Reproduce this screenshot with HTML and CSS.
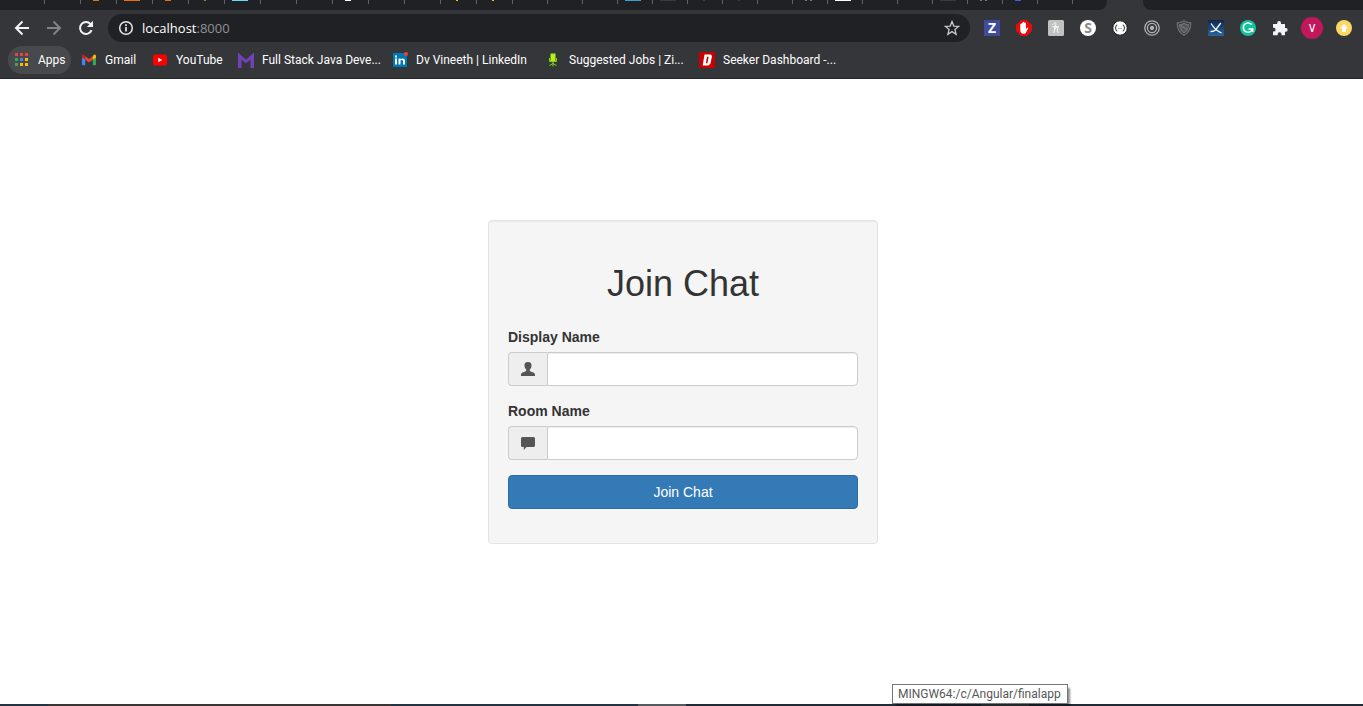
FILE: index.html
```html
<!DOCTYPE html>
<html lang="en">
<head>
<meta charset="utf-8">
<title>Join Chat</title>
<link rel="stylesheet" href="styles.css">
</head>
<body>
<header class="browser">
  <div class="tabs">
    <div class="tabs-left">
      <i class="tab"></i><i class="tab"></i>
      <i class="tab"><b class="fav dot orange"></b></i>
      <i class="tab"><b class="fav orange"></b></i>
      <i class="tab"><b class="fav dot orange"></b></i>
      <i class="tab"><b class="fav tip green"></b></i>
      <i class="tab"><b class="fav cyan"></b></i>
      <i class="tab"></i><i class="tab"></i>
      <i class="tab"><b class="fav dot white"></b></i>
      <i class="tab"></i><i class="tab"></i>
      <i class="tab"><b class="fav tip yellow"></b></i>
      <i class="tab"><b class="fav tip yellow"></b></i>
      <i class="tab narrow"></i><i class="tab narrow"></i><i class="tab narrow"></i>
      <i class="tab narrow"><b class="fav blue"></b></i>
      <i class="tab narrow"><b class="fav dim"></b></i>
      <i class="tab narrow"><b class="fav tip dim"></b></i>
      <i class="tab narrow"><b class="fav tip dim"></b></i>
      <i class="tab narrow"></i>
      <i class="tab narrow"><b class="fav pair"></b></i>
      <i class="tab narrow"><b class="fav white"></b></i>
      <i class="tab narrow"></i><i class="tab narrow"></i>
      <i class="tab narrow"><b class="fav dim"></b></i>
      <i class="tab narrow"><b class="fav pair"></b></i>
      <i class="tab narrow"><b class="fav dot indigo"></b></i>
      <i class="tab narrow"></i>
    </div>
    <div class="tab-active"></div>
    <div class="tabs-right"></div>
  </div>

  <div class="toolbar">
    <button class="tool" type="button" aria-label="Back"><svg width="16" height="16" viewBox="0 0 16 16" fill="none" stroke="#f1f3f4" stroke-width="2"><path d="M15 8H2M8.500 1.500 2 8l6.500 6.500"/></svg></button>
    <button class="tool" type="button" aria-label="Forward"><svg width="16" height="16" viewBox="0 0 16 16" fill="none" stroke="#828386" stroke-width="2"><path d="M1 8h13M7.500 1.500 14 8l-6.500 6.500"/></svg></button>
    <button class="tool" type="button" aria-label="Reload"><svg width="16" height="16" viewBox="0 0 16 16"><path d="M13.600 10.200A6 6 0 1 1 12.600 4.100" fill="none" stroke="#f1f3f4" stroke-width="2"/><path d="M15 .8V7H8.800z" fill="#f1f3f4"/></svg></button>
    <div class="omnibox">
      <svg width="16" height="16" viewBox="0 0 16 16" fill="none" stroke="#e8eaed"><circle cx="8" cy="8" r="6.300" stroke-width="1.500"/><path d="M8 7v4.500M8 4.200v1.700" stroke-width="1.700"/></svg>
      <a class="address" href="#">localhost<span class="port">:8000</span></a>
      <button class="star" type="button" aria-label="Bookmark this page"><svg width="16" height="16" viewBox="0 0 16 16"><path d="m8 1.600 1.800 4.500 4.800.3-3.700 3.100 1.200 4.700L8 11.600l-4.100 2.600 1.200-4.700-3.700-3.100 4.800-.3z" fill="none" stroke="#c8cacd" stroke-width="1.300"/></svg></button>
    </div>
    <div class="extensions">
      <button class="tool" type="button" aria-label="Z extension"><span class="ext-z">Z</span></button>
      <button class="tool" type="button" aria-label="Ad blocker"><svg width="16" height="16" viewBox="0 0 16 16"><path d="M5 0h6l5 5v6l-5 5H5l-5-5V5z" fill="#e40d0d"/><path d="M4.300 7.500V4.200q.8-.8 1.300 0V7V2.900q.8-.8 1.400 0V7V2.200q.8-.8 1.500 0V7V3q.9-.7 1.400.1V9l1.300-1.300q1.200-.4 1 .5l-2.300 4.500Q9.300 14 7.500 13.800 4.300 13.500 4.300 10z" fill="#fff"/></svg></button>
      <button class="tool" type="button" aria-label="Honey"><svg width="16" height="16" viewBox="0 0 16 16"><rect width="16" height="16" rx="1.500" fill="#c1c1c1"/><path d="M4.500 4.500c1 .3 1.500-1.700 2.800-1.700 1.300.2.200 2.700-.3 4.700L5.800 13M6.400 9.500c1.500-2.500 3.700-2.200 3.200-.5-.5 1.800-.6 4 1.400 3.200M4.500 6.800H11" fill="none" stroke="#fff" stroke-width="1"/></svg></button>
      <button class="tool" type="button" aria-label="S extension"><span class="ext-s">S</span></button>
      <button class="tool" type="button" aria-label="JSON viewer"><svg width="16" height="16" viewBox="0 0 16 16"><circle cx="8" cy="8" r="7.200" fill="#fff" stroke="#222326"/><path d="M5.300 5Q4 5 4 6.200q.1 1.600-1 1.800 1.100.2 1 1.800Q4 11 5.300 11M10.700 5Q12 5 12 6.200q-.1 1.600 1 1.800-1.100.2-1 1.800 0 1.200-1.300 1.200" fill="none" stroke="#222"/><path d="M6 8.500h4" stroke="#999" stroke-dasharray="1 .5"/></svg></button>
      <button class="tool" type="button" aria-label="Recorder"><svg width="16" height="16" viewBox="0 0 16 16" fill="none" stroke="#b2b3b5" stroke-width="1.300"><circle cx="8" cy="8" r="7.200"/><circle cx="8" cy="8" r="4.600"/><circle cx="8" cy="8" r="1.500" fill="#b2b3b5"/></svg></button>
      <button class="tool" type="button" aria-label="Shield"><svg width="16" height="16" viewBox="0 0 16 16" fill="none" stroke="#737477" stroke-width="1.200"><path d="M8 .8Q5 3 1.300 2.800 1 11.500 8 15.200 15 11.500 14.700 2.800 11 3 8 .8z"/><path d="M8 3.300Q6 4.800 3.600 4.900 3.700 10 8 12.700q4.300-2.700 4.400-7.800Q10 4.800 8 3.300zM4 5l7.500 5" fill="#55565a"/></svg></button>
      <button class="tool" type="button" aria-label="Dark theme extension"><svg width="16" height="16" viewBox="0 0 16 16"><defs><linearGradient id="sky" x2="0" y2="1"><stop stop-color="#11264e"/><stop offset="1" stop-color="#29659f"/></linearGradient></defs><rect width="16" height="16" rx="1" fill="url(#sky)"/><path d="M3 3.500q3.500 5 5.500 6.500t5 3M12.800 3 8 9.300M2.500 11.500q3 .2 5.500-1.700" fill="none" stroke="#fff" stroke-width="1.300"/></svg></button>
      <button class="tool" type="button" aria-label="Grammar checker"><svg width="16" height="16" viewBox="0 0 16 16"><circle cx="8" cy="8" r="8" fill="#15c39a"/><path d="M11.600 4.600A4.700 4.700 0 1 0 12.400 9.300M8.500 9h4.200v3" fill="none" stroke="#fff" stroke-width="1.500"/></svg></button>
      <button class="tool" type="button" aria-label="Extensions"><svg width="16" height="16" viewBox="0 0 16 16"><path d="M1 4h4.200V3a1.900 1.900 0 0 1 3.800 0v1h4v4h.8a1.800 1.800 0 0 1 0 3.700H13v3.600H9.500v-1.100a1.900 1.900 0 0 0-3.800 0v1.100H1v-3.800h1.100a1.900 1.900 0 0 0 0-3.700H1z" fill="#f1f3f4"/></svg></button>
      <button class="tool" type="button" aria-label="Profile"><span class="avatar">V</span></button>
      <button class="tool" type="button" aria-label="Update"><svg width="16" height="16" viewBox="0 0 16 16"><circle cx="8" cy="8" r="8" fill="#fdd663"/><path d="m8 3.800 4 4.500h-2V12H6V8.300H4z" fill="#fff"/></svg></button>
    </div>
  </div>

  <nav class="bookmarks">
    <a class="bookmark apps" href="#"><svg width="16" height="16" viewBox="0 0 16 16"><g fill="#ea4335"><path d="M1 1h3v3H1zM6 1h3v3H6zM11 1h3v3h-3z"/></g><path d="M1 6h3v3H1zM1 11h3v3H1z" fill="#34a853"/><path d="M6 6h3v3H6z" fill="#4285f4"/><path d="M11 6h3v3h-3zM6 11h3v3H6zM11 11h3v3h-3z" fill="#fbbc04"/></svg><span>Apps</span></a>
    <a class="bookmark" href="#"><svg width="16" height="16" viewBox="0 0 16 16"><path d="M1 4v8.500q0 .8.800.8H4.200V6.500z" fill="#4285f4"/><path d="M15 4v8.500q0 .8-.8.800h-2.400V6.500z" fill="#34a853"/><path d="M4.200 4 8 7l3.800-3v3.800L8 10.600 4.200 7.800z" fill="#ea4335"/><path d="M1 4.200Q1 2 3 2.800L4.200 4v3.800L1 5.500z" fill="#c5221f"/><path d="M15 4.200q0-2.200-2-1.400L11.800 4v3.800L15 5.500z" fill="#fbbc04"/></svg><span>Gmail</span></a>
    <a class="bookmark" href="#"><svg width="16" height="16" viewBox="0 0 16 16"><rect x="1" y="2.500" width="14" height="11" rx="2.500" fill="#f00"/><path d="m6.300 5.700 4 2.300-4 2.300z" fill="#fff"/></svg><span>YouTube</span></a>
    <a class="bookmark" href="#"><svg width="16" height="16" viewBox="0 0 16 16"><path d="m0 .5 8 7.300 8-7.300V16h-3.500V7.600L8 11.600l-4.500-4V16H0z" fill="#6f42b5"/></svg><span>Full Stack Java Deve...</span></a>
    <a class="bookmark" href="#"><svg width="16" height="16" viewBox="0 0 16 16"><rect x="1" y="1" width="14" height="14" fill="#0077b5"/><path d="M3 6.500h2v6H3zM3 3.500h2v2H3zM6.500 6.500h2v.8q2.200-1.700 4 0 .6.700.5 2v3.200h-2V9.500q0-2-2.500-1.200v4.200H6.500z" fill="#fff"/><circle cx="14" cy="2" r="2" fill="#ea4335"/></svg><span>Dv Vineeth | LinkedIn</span></a>
    <a class="bookmark" href="#"><svg width="16" height="16" viewBox="0 0 16 16"><rect width="16" height="16" rx="2" fill="#303936"/><path d="M5.500 1.500h5v7.500h-5z" fill="#b5f21c"/><path d="M4.500 6v3.500h7V6M8 9v5.500M4.500 13.500 8 11.500l3.500 2" stroke="#8ccf18" fill="none"/></svg><span>Suggested Jobs | Zi...</span></a>
    <a class="bookmark" href="#"><svg width="16" height="16" viewBox="0 0 16 16"><path d="M0 0h16v16H0z" fill="#c70000"/><path d="M5.500 2.500h6.200L13 4l-1.500 7.500-2 2H3.700zM8 4.800 6.800 11.300h1.600L9.700 4.800z" fill="#fff" fill-rule="evenodd"/></svg><span>Seeker Dashboard -...</span></a>
  </nav>
</header>

<main class="page">
  <form class="card">
    <h1>Join Chat</h1>
    <div class="field">
      <label for="name">Display Name</label>
      <div class="input-group">
        <span class="addon"><svg width="14" height="14" viewBox="0 0 14 14"><path d="M7 0C4.200 0 3.400 1.500 3.500 3.500c0 2 .9 3.200 1.700 4v1.300C5 10 0 10.200 0 12.500V14h14v-1.500c0-2.300-5-2.500-5.200-3.700V7.500c.8-.8 1.700-2 1.700-4C10.600 1.500 9.800 0 7 0z" fill="#555"/></svg></span>
        <input id="name" type="text">
      </div>
    </div>
    <div class="field">
      <label for="room">Room Name</label>
      <div class="input-group">
        <span class="addon"><svg width="14" height="14" viewBox="0 0 14 14"><path d="M1.500 1h11Q14 1 14 2.500v7q0 1.500-1.500 1.500H5.500L2.800 14v-3H1.500Q0 11 0 9.500v-7Q0 1 1.500 1z" fill="#555"/></svg></span>
        <input id="room" type="text">
      </div>
    </div>
    <button class="join" type="submit">Join Chat</button>
  </form>
</main>

<footer class="taskbar">
  <div class="tooltip" role="tooltip">MINGW64:/c/Angular/finalapp</div>
</footer>
</body>
</html>
```

FILE: styles.css
```css
* { box-sizing: border-box; }

body {
  margin: 0;
  min-height: 100vh;
  display: flex;
  flex-direction: column;
  background: #fff;
  color: #333;
  font: 14px/20px "Liberation Sans", Arial, sans-serif;
}

button { border: 0; padding: 0; background: none; font: inherit; }
a { color: inherit; text-decoration: none; }
svg { display: block; flex: none; }

.browser {
  background: #35363a;
  border-bottom: 1px solid #262729;
  font-family: "Open Sans", "Noto Sans", sans-serif;
}

/* Tab strip */
.tabs { display: flex; height: 10px; }
.tabs-left {
  display: flex;
  width: 1107px;
  padding-left: 9px;
  background: #202124;
  border-bottom-right-radius: 8px;
}
.tab-active { width: 36px; }
.tabs-right { flex: 1; background: #202124; border-bottom-left-radius: 8px; }
.tab {
  flex: none;
  width: 36px;
  height: 4px;
  padding-left: 7px;
  border-right: 1px solid #5f6368;
}
.narrow { width: 35px; }
.fav { display: block; width: 16px; height: 1px; }
.dot { width: 6px; margin-left: 5px; }
.tip { width: 2px; margin-left: 8px; }
.orange { background: #e8710a; }
.green { background: #689f38; }
.cyan { background: #61dafb; }
.white { background: #fff; }
.yellow { background: #fbbc04; }
.blue { background: #3aa0d8; }
.dim { background: #3a3b3f; }
.indigo { background: #3d5afe; }
.pair { width: 7px; margin-left: 5px; border: solid #77797d; border-width: 0 2px; }

/* Toolbar */
.toolbar { display: flex; align-items: center; height: 32px; padding: 4px 3px 0 6px; }
.tool {
  display: flex;
  align-items: center;
  justify-content: center;
  width: 32px;
  height: 28px;
}
.omnibox {
  flex: 1;
  display: flex;
  align-items: center;
  gap: 8px;
  height: 28px;
  margin: 0 6px;
  padding: 0 10px;
  border-radius: 14px;
  background: #202124;
}
.address { flex: 1; color: #fff; font-size: 13px; }
.port { color: #8f9296; }
.extensions { display: flex; }
.ext-z, .ext-s, .avatar { display: block; width: 16px; height: 16px; color: #fff; font-weight: 700; font-size: 14px; line-height: 16px; }
.ext-z { background: #3f4b9b; }
.ext-s { border-radius: 50%; background: #fff; color: #8b8b8b; }
.avatar { width: 22px; height: 22px; border-radius: 50%; background: #c2185b; font-size: 10px; font-weight: 600; line-height: 22px; }

/* Bookmarks bar */
.bookmarks {
  display: grid;
  grid-template-columns: 67px 71px 86px 154px 153px 154px 154px;
  align-items: center;
  height: 36px;
  padding: 0 8px;
  color: #fff;
  font: 12px/20px Roboto, "Noto Sans", sans-serif;
}
.bookmark {
  display: flex;
  align-items: center;
  gap: 8px;
  height: 28px;
  margin-right: 4px;
  padding-left: 6px;
  border-radius: 14px;
  white-space: nowrap;
}
.apps { background: #48494d; }

/* Join form */
.page { flex: 1; padding: 141px 0 20px 3px; }
.card {
  width: 390px;
  max-width: 100%;
  margin: 0 auto;
  padding: 19px 19px 34px;
  border: 1px solid #e3e3e3;
  border-radius: 4px;
  background: #f5f5f5;
  box-shadow: inset 0 1px 1px rgba(0, 0, 0, .05);
}
.card h1 { margin: 24px 0 23px; font-size: 36px; font-weight: 400; line-height: 40px; text-align: center; }
.field { margin-bottom: 15px; }
.field label { display: block; margin-bottom: 5px; font-weight: 700; }
.input-group { display: flex; height: 34px; }
.addon {
  display: flex;
  align-items: center;
  justify-content: center;
  width: 39px;
  border: 1px solid #ccc;
  border-right: 0;
  border-radius: 4px 0 0 4px;
  background: #eee;
}
.input-group input {
  flex: 1;
  min-width: 0;
  padding: 6px 12px;
  border: 1px solid #ccc;
  border-radius: 0 4px 4px 0;
  background: #fff;
  box-shadow: inset 0 1px 1px rgba(0, 0, 0, .075);
  color: #555;
  font: inherit;
}
.join {
  display: block;
  width: 100%;
  height: 34px;
  border: 1px solid #2e6da4;
  border-radius: 4px;
  background: #337ab7;
  color: #fff;
}

/* Taskbar edge with its hover label */
.taskbar {
  position: relative;
  height: 2px;
  background: linear-gradient(90deg, #24333f 48px, #3b3636 48px 391px, #24333f 391px 638px, #535b5e 638px 686px, #202b36 686px 981px, #3b4045 981px 1029px, #202b36 1029px);
}
.tooltip {
  position: absolute;
  left: 892px;
  bottom: 2px;
  height: 20px;
  padding: 0 6px 0 5px;
  border: 1px solid #767676;
  background: #fff;
  box-shadow: 3px 3px 2px -1px rgba(0, 0, 0, .45);
  color: #575757;
  font: 12px/18px Roboto, "Noto Sans", sans-serif;
  white-space: nowrap;
}
```
